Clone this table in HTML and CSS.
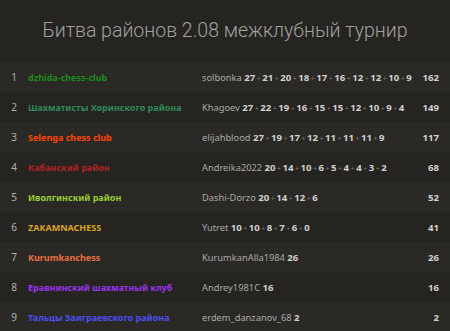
FILE: index.html
```html
<!DOCTYPE html>
<html>
<head>
<meta charset="utf-8">
<link rel="stylesheet" href="styles.css">
</head>
<body>
<div class="box">
  <h1 class="title">Битва районов 2.08 межклубный турнир</h1>
  <div class="standing">
    <div class="row"><span class="rank">1</span><span class="team c1">dzhida-chess-club</span><span class="players">solbonka <b>27</b><i>+</i><b>21</b><i>+</i><b>20</b><i>+</i><b>18</b><i>+</i><b>17</b><i>+</i><b>16</b><i>+</i><b>12</b><i>+</i><b>12</b><i>+</i><b>10</b><i>+</i><b>9</b></span><span class="total">162</span></div>
    <div class="row"><span class="rank">2</span><span class="team c2">Шахматисты Хоринского района</span><span class="players">Khagoev <b>27</b><i>+</i><b>22</b><i>+</i><b>19</b><i>+</i><b>16</b><i>+</i><b>15</b><i>+</i><b>15</b><i>+</i><b>12</b><i>+</i><b>10</b><i>+</i><b>9</b><i>+</i><b>4</b></span><span class="total">149</span></div>
    <div class="row"><span class="rank">3</span><span class="team c3">Selenga chess club</span><span class="players">elijahblood <b>27</b><i>+</i><b>19</b><i>+</i><b>17</b><i>+</i><b>12</b><i>+</i><b>11</b><i>+</i><b>11</b><i>+</i><b>11</b><i>+</i><b>9</b></span><span class="total">117</span></div>
    <div class="row"><span class="rank">4</span><span class="team c4">Кабанский район</span><span class="players">Andreika2022 <b>20</b><i>+</i><b>14</b><i>+</i><b>10</b><i>+</i><b>6</b><i>+</i><b>5</b><i>+</i><b>4</b><i>+</i><b>4</b><i>+</i><b>3</b><i>+</i><b>2</b></span><span class="total">68</span></div>
    <div class="row"><span class="rank">5</span><span class="team c5">Иволгинский район</span><span class="players">Dashi-Dorzo <b>20</b><i>+</i><b>14</b><i>+</i><b>12</b><i>+</i><b>6</b></span><span class="total">52</span></div>
    <div class="row"><span class="rank">6</span><span class="team c6">ZAKAMNACHESS</span><span class="players">Yutret <b>10</b><i>+</i><b>10</b><i>+</i><b>8</b><i>+</i><b>7</b><i>+</i><b>6</b><i>+</i><b>0</b></span><span class="total">41</span></div>
    <div class="row"><span class="rank">7</span><span class="team c7">Kurumkanchess</span><span class="players">KurumkanAlla1984 <b>26</b></span><span class="total">26</span></div>
    <div class="row"><span class="rank">8</span><span class="team c8">Еравнинский шахматный клуб</span><span class="players">Andrey1981C <b>16</b></span><span class="total">16</span></div>
    <div class="row"><span class="rank">9</span><span class="team c9">Тальцы Заиграевского района</span><span class="players">erdem_danzanov_68 <b>2</b></span><span class="total">2</span></div>
  </div>
</div>
</body>
</html>
```

FILE: styles.css
```css
html, body {
  margin: 0;
  padding: 0;
  background: #262421;
}
body {
  font-family: "Noto Sans", "Liberation Sans", sans-serif;
  color: #bababa;
}
.box {
  width: 450px;
}
.title {
  margin: 0;
  height: 62px;
  display: flex;
  align-items: center;
  justify-content: center;
  font-family: Roboto, "Noto Sans", sans-serif;
  font-weight: 300;
  font-size: 19.5px;
  color: #a0a0a0;
  padding-bottom: 2px;
  box-sizing: border-box;
}
.standing {
  display: flex;
  flex-direction: column;
}
.row {
  height: 30px;
  display: grid;
  grid-template-columns: 28px 174px 1fr auto;
  align-items: center;
  padding-right: 11px;
  white-space: nowrap;
}
.row:nth-child(odd) {
  background: #2b2926;
}
.row:nth-child(even) {
  background: #262421;
}
.rank {
  text-align: center;
  color: #b0b0b0;
  font-size: 10px;
}
.team {
  font-size: 9px;
  font-weight: 700;
  overflow: hidden;
}
.players {
  font-size: 9.3px;
  color: #a8a8a8;
}
.players b {
  font-size: 9.6px;
  color: #d0d0d0;
  font-weight: 700;
}
.players i {
  font-style: normal;
  font-size: 7px;
  color: #777;
  padding: 0 1.5px;
}
.total {
  text-align: right;
  font-size: 9.6px;
  font-weight: 700;
  color: #d0d0d0;
}
.c1 { color: #1b8b1b; }
.c2 { color: #2e8b57; }
.c3 { color: #ff4500; }
.c4 { color: #b22222; }
.c5 { color: #9acd32; }
.c6 { color: #daa520; }
.c7 { color: #e8703f; }
.c8 { color: #9933ee; }
.c9 { color: #4d4df0; }
```
